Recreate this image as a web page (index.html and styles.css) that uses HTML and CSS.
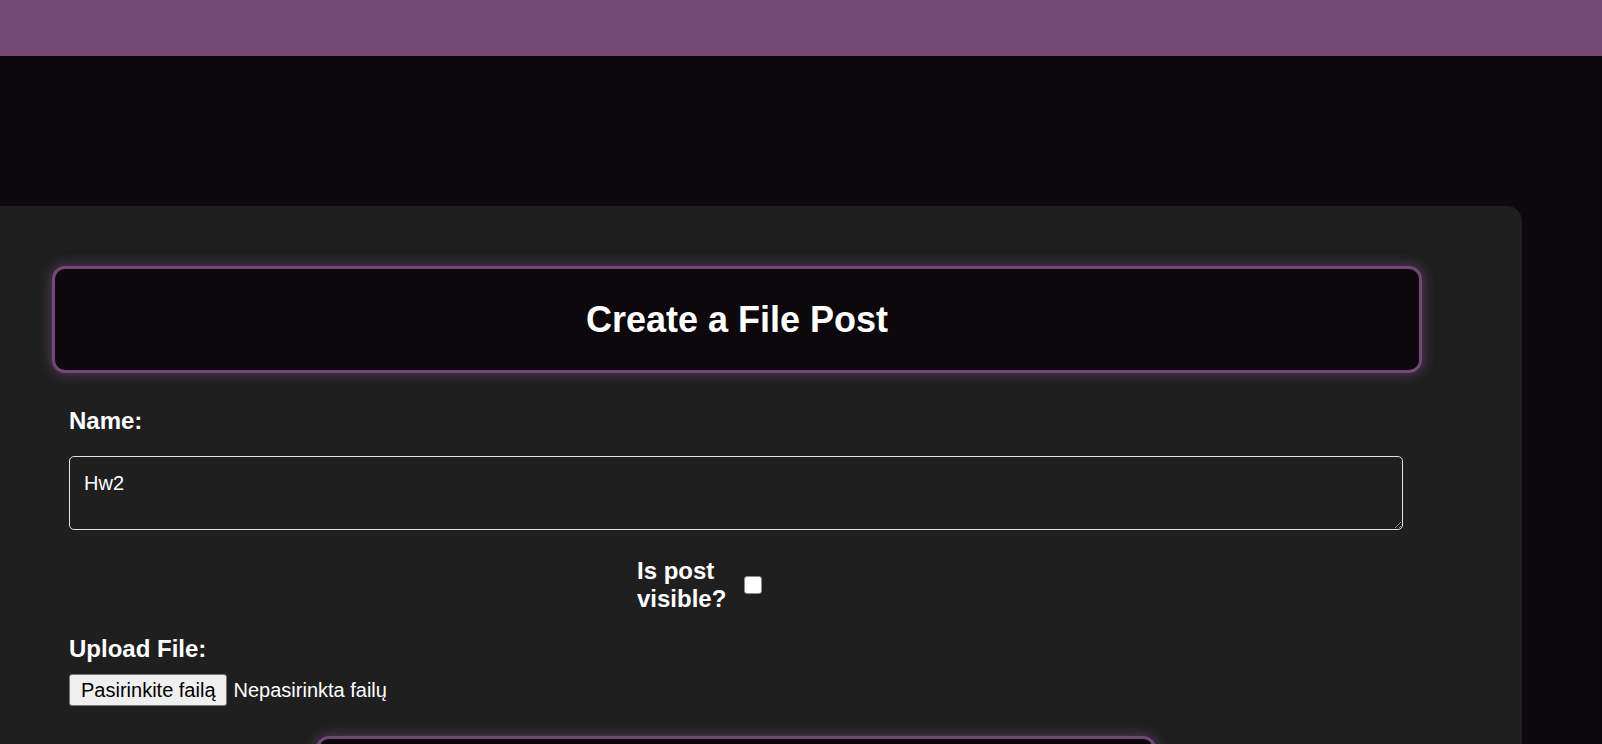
FILE: index.html
```html
<!DOCTYPE html>
<html lang="lt">
<head>
<meta charset="utf-8">
<title>Create a File Post</title>
<link rel="stylesheet" href="styles.css">
</head>
<body>
<header class="topbar"></header>
<main class="page">
  <section class="card">
    <div class="title-box">
      <h2 class="title">Create a File Post</h2>
    </div>
    <form class="form">
      <label class="field-label name-label" for="name">Name:</label>
      <textarea id="name" class="name-input">Hw2</textarea>
      <div class="visible-row">
        <label class="visible-label" for="visible">Is post visible?</label>
        <input id="visible" class="checkbox" type="checkbox">
      </div>
      <label class="field-label upload-label">Upload File:</label>
      <div class="file-row">
        <button type="button" class="file-btn">Pasirinkite failą</button>
        <span class="file-status">Nepasirinkta failų</span>
      </div>
      <div class="submit-row">
        <button type="submit" class="submit-btn"><span class="submit-text">Create Post</span></button>
      </div>
    </form>
  </section>
</main>
</body>
</html>
```
FILE: styles.css
```css
html, body {
  margin: 0;
  padding: 0;
  overflow: hidden;
}
body {
  background: #0c080b;
  font-family: "Liberation Sans", Arial, sans-serif;
  color: #ffffff;
}
.topbar {
  height: 56px;
  background: #704a72;
}
.page {
  padding-top: 150px;
}
.card {
  margin-left: -48px;
  width: 1570px;
  box-sizing: border-box;
  background: #1f1f1f;
  border-radius: 15px;
  padding: 60px 100px 40px;
}
.title-box {
  box-sizing: border-box;
  height: 107px;
  border: 3px solid #704a72;
  border-radius: 13px;
  background: #0c080b;
  box-shadow: 0 0 14px rgba(140, 90, 145, 0.55);
  display: flex;
  align-items: center;
  justify-content: center;
}
.title {
  margin: 0;
  font-size: 36px;
  font-weight: bold;
  line-height: 41px;
}
.form {
  display: flex;
  flex-direction: column;
  padding: 33px 19px 0 17px;
}
.field-label {
  font-size: 24px;
  font-weight: bold;
  line-height: 27px;
}
.name-label {
  margin-top: 1px;
}
.name-input {
  margin-top: 22px;
  box-sizing: border-box;
  height: 74px;
  width: 100%;
  background: #1f1f1f;
  color: #ffffff;
  border: 1px solid #e2e2e2;
  border-radius: 5px;
  padding: 15px 14px;
  font-family: "Liberation Sans", Arial, sans-serif;
  font-size: 20px;
  line-height: 23px;
  color-scheme: dark;
  resize: both;
}
.visible-row {
  margin-top: 27px;
  display: flex;
  align-items: center;
  padding-left: 568px;
}
.visible-label {
  width: 101px;
  font-size: 24px;
  font-weight: bold;
  line-height: 28px;
}
.checkbox {
  appearance: none;
  -webkit-appearance: none;
  margin: 0 0 0 6px;
  width: 18px;
  height: 18px;
  box-sizing: border-box;
  background: #ffffff;
  border: 1.5px solid #8a8a8a;
  border-radius: 3px;
}
.upload-label {
  margin-top: 22px;
}
.file-row {
  margin-top: 12px;
  display: flex;
  align-items: center;
  gap: 7px;
}
.file-btn {
  box-sizing: border-box;
  height: 32px;
  padding: 0 10px 0 11px;
  background: #efefef;
  color: #000000;
  border: 1px solid #767676;
  border-radius: 3px;
  font-family: "Liberation Sans", Arial, sans-serif;
  font-size: 20px;
}
.file-status {
  font-size: 20px;
}
.submit-row {
  margin-top: 30px;
  display: flex;
  justify-content: center;
}
.submit-btn {
  width: 840px;
  box-sizing: border-box;
  border: 3px solid #704a72;
  border-radius: 13px;
  background: #0c080b;
  box-shadow: 0 0 14px rgba(140, 90, 145, 0.55);
  color: #ffffff;
  font-family: "Liberation Sans", Arial, sans-serif;
  font-size: 28px;
  font-weight: bold;
  padding: 50px 0 30px;
}
.submit-text {
  display: block;
}
```
